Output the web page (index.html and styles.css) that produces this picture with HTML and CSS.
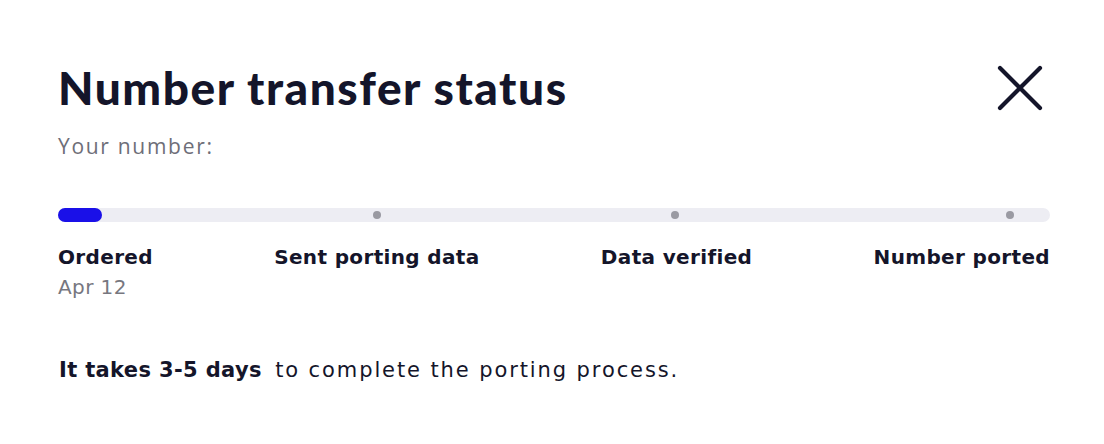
FILE: index.html
```html
<!DOCTYPE html>
<html lang="en">
<head>
<meta charset="utf-8">
<link rel="stylesheet" href="styles.css">
</head>
<body>
<div class="modal">
  <div class="header">
    <h1 class="title">Number transfer status</h1>
    <button class="close" aria-label="Close">
      <svg width="46" height="46" viewBox="0 0 46 46"><path d="M3 3L43 43M43 3L3 43" stroke="#14152a" stroke-width="4.2" stroke-linecap="round" fill="none"/></svg>
    </button>
  </div>
  <div class="subtitle">Your number:</div>
  <div class="track">
    <div class="fill"></div>
    <span class="dot d1"></span>
    <span class="dot d2"></span>
    <span class="dot d3"></span>
  </div>
  <div class="steps">
    <div class="step">
      <div class="step-label">Ordered</div>
      <div class="step-date">Apr 12</div>
    </div>
    <div class="step"><div class="step-label">Sent porting data</div></div>
    <div class="step"><div class="step-label">Data verified</div></div>
    <div class="step"><div class="step-label">Number ported</div></div>
  </div>
  <p class="note"><b>It takes 3-5 days</b>&nbsp; <span class="rest">to complete the porting process.</span></p>
</div>
</body>
</html>
```
FILE: styles.css
```css
html, body {
  margin: 0;
  padding: 0;
  background: #ffffff;
}
.modal {
  width: 992px;
  padding: 58px 54px 0 58px;
  font-family: "Lato", "Liberation Sans", sans-serif;
  color: #14152a;
}
.header {
  display: flex;
  justify-content: space-between;
  align-items: center;
}
.title {
  margin: 0;
  font-size: 46px;
  font-weight: 900;
  line-height: 60px;
  letter-spacing: 1.55px;
}
.close {
  border: none;
  background: none;
  padding: 0;
  margin-right: 7px;
  width: 46px;
  height: 46px;
  cursor: pointer;
}
.subtitle {
  margin-top: 14px;
  font-family: "Open Sans", sans-serif;
  font-size: 21px;
  letter-spacing: 1.7px;
  color: #6e6e78;
  line-height: 28px;
}
.track {
  position: relative;
  margin-top: 48px;
  height: 14px;
  border-radius: 7px;
  background: #ededf3;
}
.fill {
  width: 44px;
  height: 14px;
  border-radius: 7px;
  background: #1a10e8;
}
.dot {
  position: absolute;
  top: 3px;
  width: 8px;
  height: 8px;
  border-radius: 50%;
  background: #9a9aa2;
  margin-left: -4px;
}
.d1 { left: 319px; }
.d2 { left: 617px; }
.d3 { left: 952px; }
.steps {
  display: flex;
  justify-content: space-between;
  margin-top: 21px;
}
.step-label {
  font-family: "DejaVu Sans", sans-serif;
  font-weight: 700;
  font-size: 20px;
  letter-spacing: 0.35px;
  line-height: 28px;
}
.step-date {
  margin-top: 4px;
  font-family: "DejaVu Sans", sans-serif;
  font-size: 20px;
  letter-spacing: 0.4px;
  color: #77777f;
}
.note {
  margin: 57px 0 0 1px;
  font-family: "DejaVu Sans", sans-serif;
  font-size: 21px;
  line-height: 28px;
}
.note b {
  font-weight: 700;
  letter-spacing: 0.35px;
}
.rest {
  letter-spacing: 1.9px;
}
```
